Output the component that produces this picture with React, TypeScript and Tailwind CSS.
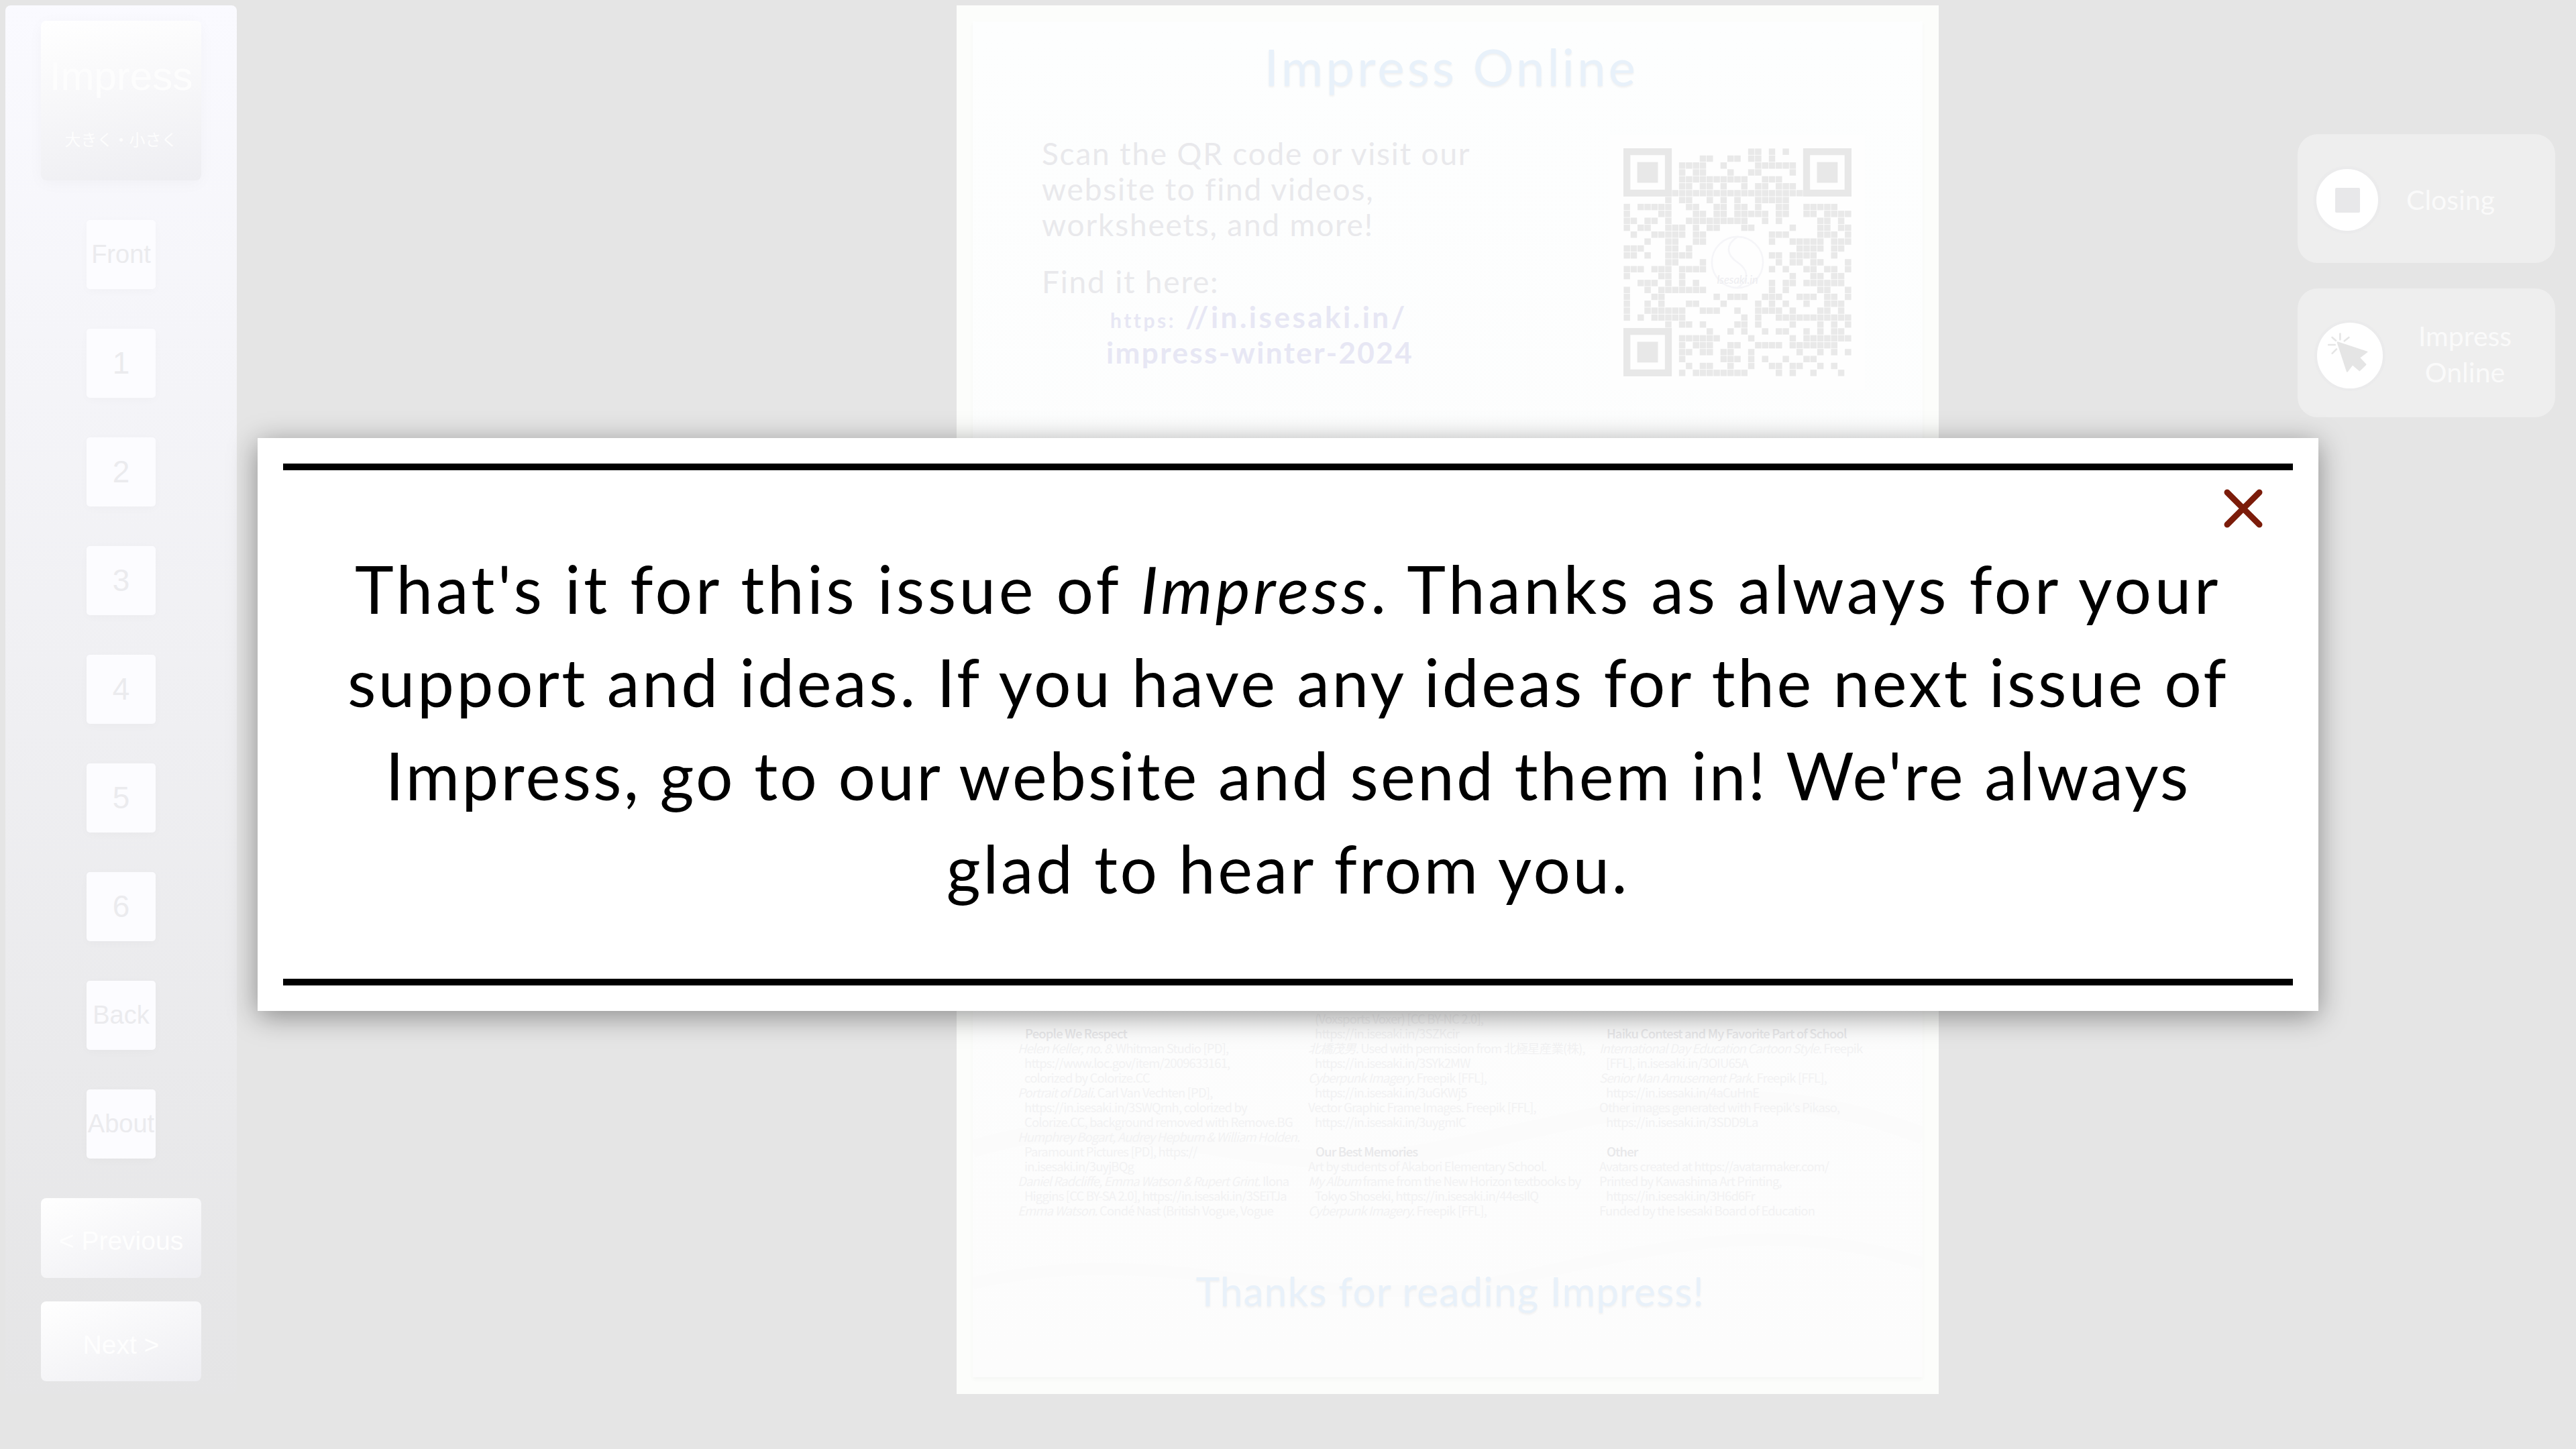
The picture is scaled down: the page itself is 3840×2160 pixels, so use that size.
import React from "react";

const comic = "font-['Lato','Noto_Sans',sans-serif]";
const arial = "font-['Liberation_Sans',Arial,sans-serif]";
const credit = "font-['Noto_Sans_CJK_JP','Noto_Sans',sans-serif]";

const navItems = ["Front", "1", "2", "3", "4", "5", "6", "Back", "About"];

// module runs per row, finder corners are drawn apart
const qrRows: number[][][] = [
  [[18, 19], [21, 21], [23, 23]],
  [[11, 12], [15, 16], [18, 19], [21, 21]],
  [[8, 11], [14, 14], [19, 24]],
  [[8, 8], [10, 11], [15, 15], [18, 19], [24, 24]],
  [[8, 17], [20, 22]],
  [[8, 9], [11, 12], [14, 14], [17, 17], [19, 20], [22, 24]],
  [[7, 25]],
  [[6, 6], [8, 9], [12, 12], [14, 14], [16, 16], [19, 23]],
  [[0, 0], [2, 6], [9, 10], [13, 14], [16, 17], [19, 19], [22, 23], [26, 30]],
  [[0, 0], [5, 6], [10, 11], [13, 14], [16, 20], [22, 23], [26, 27], [29, 32]],
  [[0, 1], [3, 4], [6, 6], [9, 17], [20, 20], [22, 22], [28, 29], [31, 31]],
  [[0, 0], [2, 3], [6, 8], [10, 10], [12, 13], [17, 18], [24, 24], [28, 29], [31, 32]],
  [[1, 1], [4, 8], [10, 11], [21, 23], [28, 30], [32, 32]],
  [[3, 3], [6, 7], [10, 11], [21, 21], [24, 28], [30, 32]],
  [[0, 2], [6, 7], [9, 9], [25, 28], [30, 31]],
  [[0, 1], [3, 3], [6, 9], [21, 22], [24, 27], [30, 30]],
  [[6, 7], [11, 11], [22, 22], [24, 25], [27, 28], [32, 32]],
  [[0, 2], [4, 6], [8, 11], [21, 21], [23, 23], [26, 27], [29, 30], [32, 32]],
  [[0, 0], [5, 6], [8, 8], [24, 24], [27, 28], [30, 31]],
  [[2, 4], [6, 6], [8, 8], [10, 10], [21, 21], [23, 24], [26, 31]],
  [[0, 0], [3, 3], [5, 11], [21, 21], [23, 23], [28, 29], [32, 32]],
  [[0, 0], [4, 5], [13, 13], [15, 17], [20, 22], [25, 27], [29, 30], [32, 32]],
  [[0, 0], [3, 3], [5, 5], [9, 10], [14, 14], [19, 19], [21, 21], [23, 23], [26, 26], [29, 31]],
  [[0, 0], [3, 8], [11, 13], [16, 16], [19, 22], [24, 24], [28, 29], [31, 31]],
  [[0, 0], [2, 2], [4, 8], [17, 17], [19, 19], [22, 32]],
  [[6, 6], [8, 9], [11, 11], [16, 17], [19, 19], [24, 24], [28, 28], [30, 30], [32, 32]],
  [[12, 12], [15, 15], [17, 17], [20, 20], [22, 23], [26, 26], [28, 28], [30, 31]],
  [[8, 13], [18, 18], [24, 24], [26, 32]],
  [[8, 8], [10, 12], [15, 16], [19, 22], [24, 30]],
  [[8, 9], [11, 12], [14, 15], [18, 18], [25, 25], [28, 28], [30, 30], [32, 32]],
  [[8, 8], [14, 16], [18, 18], [20, 20], [23, 23], [26, 27]],
  [[9, 9], [11, 12], [15, 15], [18, 18], [21, 22], [24, 25], [28, 28], [30, 30]],
  [[8, 8], [10, 17], [22, 22], [24, 24], [27, 27], [31, 31]],
];

function Finder({ x, y }: { x: number; y: number }) {
  return (
    <g>
      <path
        fillRule="evenodd"
        d={`M${x} ${y}h7v7h-7zM${x + 1} ${y + 1}v5h5v-5z`}
        fill="#e8e8e8"
      />
      <rect x={x + 2} y={y + 2} width={3} height={3} fill="#e8e8e8" />
    </g>
  );
}

function QrCode() {
  return (
    <div className="w-[380px] h-[380px] bg-[#fefefe] flex items-center justify-center">
      <svg width="340" height="340" viewBox="0 0 33 33">
        {qrRows.map((runs, r) =>
          runs.flatMap(([a, b]) => {
            const cells = [];
            for (let c = a; c <= b; c++) {
              cells.push(
                <rect key={`${r}-${c}`} x={c + 0.04} y={r + 0.04} width={0.92} height={0.92} fill="#e9e9e9" />
              );
            }
            return cells;
          })
        )}
        <Finder x={0} y={0} />
        <Finder x={26} y={0} />
        <Finder x={0} y={26} />
        <circle cx="16.5" cy="16.5" r="3.7" fill="none" stroke="#f5f5f8" strokeWidth="0.25" />
        <path d="M16.5 12.8c-1.8 1.2-1.6 2.6 0 3.7s1.8 2.5 0 3.7" fill="none" stroke="#f5f5f8" strokeWidth="0.25" />
        <text x="16.5" y="19.6" textAnchor="middle" fontSize="1.6" fontStyle="italic" fill="#ededf0" fontFamily="Lato">
          Isesaki.in
        </text>
      </svg>
    </div>
  );
}

function CreditLine({ head, rest, indent }: { head?: string; rest?: string; indent?: boolean }) {
  return (
    <div className={`whitespace-nowrap h-[22px] ${indent ? "pl-[10px]" : ""}`}>
      {head && <i>{head}</i>}
      {rest}
    </div>
  );
}

function CreditHead({ children }: { children: React.ReactNode }) {
  return <div className="h-[22px] pl-[11px] font-medium text-[#e8e8ea] whitespace-nowrap">{children}</div>;
}

function Credits() {
  return (
    <div className={`grid grid-cols-[433px_434px_1fr] pl-[67px] text-[18.5px] leading-[22px] tracking-[-0.85px] text-[#f2f2f3] ${credit}`}>
      <div className="mt-[22px]">
        <CreditHead>People We Respect</CreditHead>
        <CreditLine head="Helen Keller, no. 8." rest=" Whitman Studio [PD]," />
        <CreditLine indent rest="https://www.loc.gov/item/2009633161," />
        <CreditLine indent rest="colorized by Colorize.CC" />
        <CreditLine head="Portrait of Dali." rest=" Carl Van Vechten [PD]," />
        <CreditLine indent rest="https://in.isesaki.in/3SWQrnh, colorized by" />
        <CreditLine indent rest="Colorize.CC, background removed with Remove.BG" />
        <CreditLine head="Humphrey Bogart, Audrey Hepburn & William Holden." />
        <CreditLine indent rest="Paramount Pictures [PD], https://" />
        <CreditLine indent rest="in.isesaki.in/3uyjBQg" />
        <CreditLine head="Daniel Radcliffe, Emma Watson & Rupert Grint." rest=" Ilona" />
        <CreditLine indent rest="Higgins [CC BY-SA 2.0], https://in.isesaki.in/3SEiTJa" />
        <CreditLine head="Emma Watson." rest=" Condé Nast (British Vogue, Vogue" />
      </div>
      <div>
        <CreditLine indent rest="(Voxsports Voxer) [CC BY-NC 2.0]," />
        <CreditLine indent rest="https://in.isesaki.in/3SZKcir" />
        <CreditLine head="北橋茂男." rest=" Used with permission from 北極星産業(株)," />
        <CreditLine indent rest="https://in.isesaki.in/3SYk2MW" />
        <CreditLine head="Cyberpunk Imagery." rest=" Freepik [FFL]," />
        <CreditLine indent rest="https://in.isesaki.in/3uGKWj5" />
        <CreditLine rest="Vector Graphic Frame Images. Freepik [FFL]," />
        <CreditLine indent rest="https://in.isesaki.in/3uygmIC" />
        <div className="h-[22px]" />
        <CreditHead>Our Best Memories</CreditHead>
        <CreditLine rest="Art by students of Akabori Elementary School." />
        <CreditLine head="My Album" rest=" frame from the New Horizon textbooks by" />
        <CreditLine indent rest="Tokyo Shoseki, https://in.isesaki.in/44esIlQ" />
        <CreditLine head="Cyberpunk Imagery." rest=" Freepik [FFL]," />
      </div>
      <div className="mt-[22px]">
        <CreditHead>Haiku Contest and My Favorite Part of School</CreditHead>
        <CreditLine head="International Day Education Cartoon Style." rest=" Freepik" />
        <CreditLine indent rest="[FFL], in.isesaki.in/3OIU65A" />
        <CreditLine head="Senior Man Amusement Park." rest=" Freepik [FFL]," />
        <CreditLine indent rest="https://in.isesaki.in/4aCuHnE" />
        <CreditLine rest="Other images generated with Freepik's Pikaso," />
        <CreditLine indent rest="https://in.isesaki.in/3SDD9La" />
        <div className="h-[22px]" />
        <CreditHead>Other</CreditHead>
        <CreditLine rest="Avatars created at https://avatarmaker.com/" />
        <CreditLine rest="Printed by Kawashima Art Printing," />
        <CreditLine indent rest="https://in.isesaki.in/3H6d6Fr" />
        <CreditLine rest="Funded by the Isesaki Board of Education" />
      </div>
    </div>
  );
}

function Sidebar() {
  return (
    <div className="w-[345px] ml-[8px] mt-[8px] h-[2070px] rounded-[8px] bg-gradient-to-b from-[#fafaff] to-[#e5e5e6] flex flex-col items-center pt-[23px]">
      <div className={`w-[239px] h-[238px] rounded-[8px] bg-[linear-gradient(170deg,#ffffff,#eeeef2)] shadow-[0_4px_24px_rgba(0,0,0,0.03)] flex flex-col items-center pt-[50px] text-[#fdfdfd] ${arial}`}>
        <div className="text-[60px] leading-[66px]">Impress</div>
        <div className="text-[24px] leading-[30px] mt-[45px] font-['Noto_Sans_CJK_JP',sans-serif]">大きく・小さく</div>
      </div>
      <div className="mt-[59px] flex flex-col gap-[59px]">
        {navItems.map((n) => (
          <div
            key={n}
            className={`w-[103px] h-[103px] rounded-[5px] bg-[#fcfcff] shadow-[0_3px_14px_rgba(0,0,0,0.025)] flex items-center justify-center text-[#ebebee] ${n.length === 1 ? "text-[46px]" : "text-[38px]"} ${arial}`}
          >
            {n}
          </div>
        ))}
      </div>
      <div className={`mt-[59px] flex flex-col gap-[35px] text-[#fefefe] text-[39px] ${arial}`}>
        <div className="w-[239px] h-[119px] rounded-[8px] bg-[linear-gradient(160deg,#ffffff,#eeeef2)] flex items-center justify-center pt-[10px]">&lt; Previous</div>
        <div className="w-[239px] h-[119px] rounded-[8px] bg-[linear-gradient(160deg,#ffffff,#eeeef2)] flex items-center justify-center pt-[12px]">Next &gt;</div>
      </div>
    </div>
  );
}

function PageWaves() {
  return (
    <svg className="absolute left-0 bottom-0" width="1416" height="640" viewBox="0 0 1416 640" fill="none">
      <path d="M0 300C240 220 420 360 700 300S1160 180 1416 280" stroke="#fbfbfb" strokeWidth="26" />
      <path d="M0 500C300 430 520 560 820 490S1240 420 1416 470" stroke="#fbfbfb" strokeWidth="18" />
    </svg>
  );
}

function Page() {
  return (
    <div className={`absolute left-[1426px] top-[8px] w-[1464px] h-[2070px] bg-[#fcfdfb] p-[24px] ${comic}`}>
      <div className="relative h-[2021px] bg-[linear-gradient(180deg,#fdfefe,#fcfcfc)] shadow-[0_3px_6px_rgba(0,0,0,0.03)] pt-[27px]">
        <PageWaves />
        <div className="relative">
          <h1 className="text-center text-[76px] leading-[80px] tracking-[4.2px] pl-[11px] text-[#e8f1fa] [text-shadow:0_2px_3px_#f0f0f0]">Impress Online</h1>
          <div className="flex justify-between mt-[62px] h-[1306px] pl-[103px] pr-[86px]">
            <div className="pt-[1px] text-[46px] leading-[53px] tracking-[1.8px] text-[#e9e9ec]">
              <p>Scan the QR code or visit our</p>
              <p>website to find videos,</p>
              <p>worksheets, and more!</p>
              <p className="mt-[32px]">Find it here:</p>
              <p className="pl-[102px] text-[44px] font-bold text-[#e7e7f4] tracking-[3.5px]"><span className="text-[30px] leading-none">https:</span> //in.isesaki.in/</p>
              <p className="pl-[96px] text-[44px] font-bold text-[#e7e7f4] tracking-[2.4px]">impress-winter-2024</p>
            </div>
            <QrCode />
          </div>
          <Credits />
          <h2 className="mt-[69px] text-center text-[60px] leading-[80px] tracking-[1.3px] pl-[8px] text-[#e8f1fa] [text-shadow:0_2px_3px_#f0f0f0]">Thanks for reading Impress!</h2>
        </div>
      </div>
    </div>
  );
}

function SideLink({ icon, children, gap }: { icon: React.ReactNode; children: React.ReactNode; gap: string }) {
  return (
    <div className="h-[192px] rounded-[30px] bg-[#eeeeee] flex items-center pl-[24px] text-[#fafafa] text-[41px] leading-[54px]">
      {icon}
      <div className={gap}>{children}</div>
    </div>
  );
}

function RightLinks() {
  return (
    <div className={`absolute left-[3425px] top-[200px] w-[384px] flex flex-col gap-[38px] ${comic}`}>
      <SideLink
        gap="ml-[38px] pt-[4px]"
        icon={
          <div className="w-[100px] h-[100px] mt-[4px] rounded-full bg-white border-[4px] border-[#ebebec] shadow-[0_0_6px_rgba(0,0,0,0.01)] flex items-center justify-center">
            <div className="w-[37px] h-[37px] rounded-[2px] bg-[#e8e8ea]" />
          </div>
        }
      >
        Closing
      </SideLink>
      <SideLink
        gap="flex-1 text-center pr-[24px] pl-[8px] pt-[4px]"
        icon={
          <div className="w-[106px] h-[106px] ml-[1px] mt-[8px] rounded-full bg-white border-[4px] border-[#ebebec] shrink-0">
            <svg viewBox="4 4 308 308" className="w-full h-full">
              <path d="M100 96 238 141 202 168 232 200 203 228 170 200 145 233Z" fill="#e5e5e5" stroke="#e5e5e5" strokeWidth="6" strokeLinejoin="round" />
              <path d="M112 56v27M75 73l17 15M153 73l-21 17M58 108h30M75 148l20-20" stroke="#e5e5e5" strokeWidth="8" strokeLinecap="round" fill="none" />
            </svg>
          </div>
        }
      >
        Impress
        <br />
        Online
      </SideLink>
    </div>
  );
}

function ClosingModal() {
  return (
    <div className="absolute inset-0 flex items-center justify-center">
      <div className="w-[3072px] h-[854px] bg-white p-[38px] shadow-[0_8px_40px_rgba(0,0,0,0.4)] flex flex-col">
        <div className="h-[10px] bg-black shrink-0" />
        <div className="h-[107px] flex justify-end items-start pt-[28px] pr-[45px] shrink-0">
          <svg width="58" height="58" viewBox="0 0 58 58">
            <path d="M5 5 53 53M53 5 5 53" stroke="#7b1c0a" strokeWidth="9" strokeLinecap="round" />
          </svg>
        </div>
        <div className={`flex-1 text-center text-black text-[98px] leading-[139px] whitespace-nowrap ${comic}`}>
          <p className="tracking-[4.5px]">
            That's it for this issue of <i>Impress</i>. Thanks as always for your
          </p>
          <p className="tracking-[3.55px]">support and ideas. If you have any ideas for the next issue of</p>
          <p className="tracking-[3.25px]">Impress, go to our website and send them in! We're always</p>
          <p className="tracking-[3.5px]">glad to hear from you.</p>
        </div>
        <div className="h-[10px] bg-black shrink-0" />
      </div>
    </div>
  );
}

export default function App() {
  return (
    <div className="relative w-screen h-screen overflow-hidden bg-[#e5e5e5]">
      <Sidebar />
      <Page />
      <RightLinks />
      <ClosingModal />
    </div>
  );
}
